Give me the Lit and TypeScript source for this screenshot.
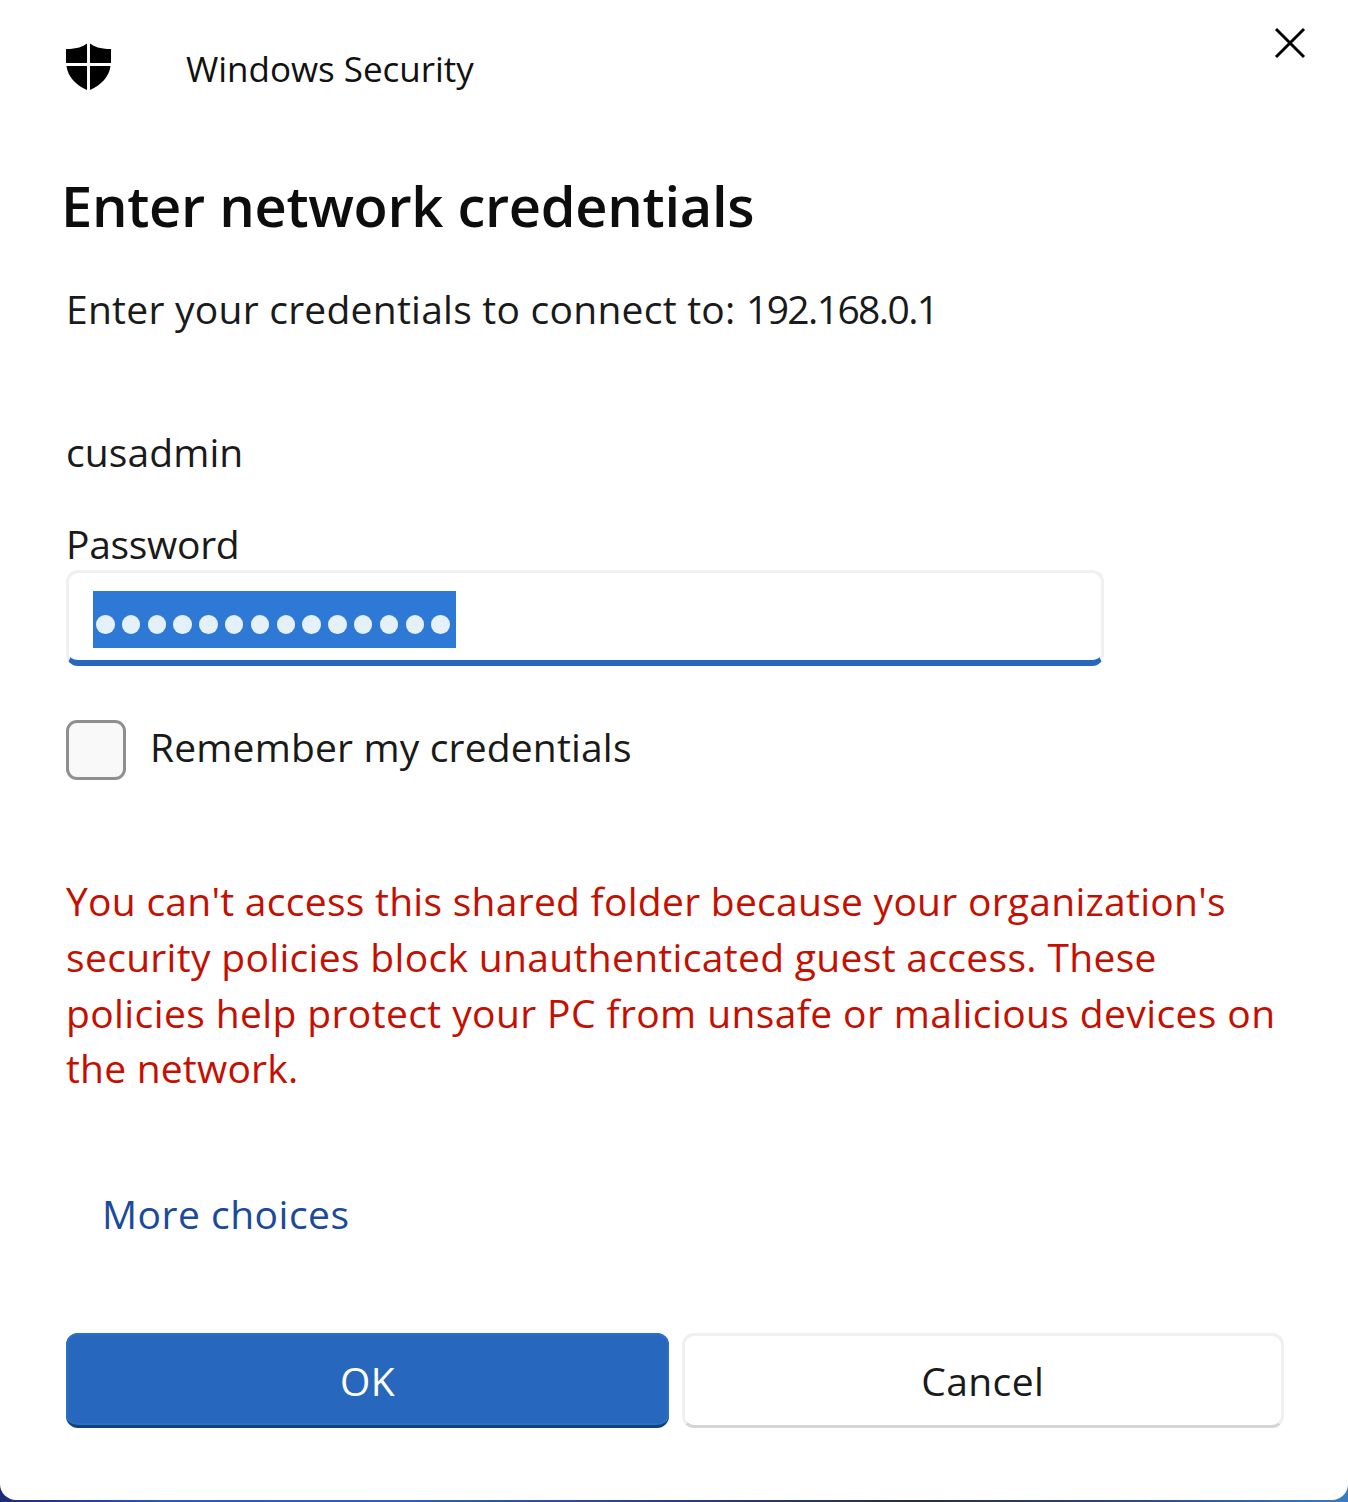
import { LitElement, html, css } from "lit";
import { customElement } from "lit/decorators.js";

@customElement("app-root")
export class AppRoot extends LitElement {
  static styles = css`
    :host {
      display: block;
      width: 1348px;
      height: 1502px;
      overflow: hidden;
      background: linear-gradient(90deg, #1c2a78 0%, #2a5aa8 12%, #2f62ad 30%, #27407f 50%, #2a2d40 68%, #2a4a80 84%, #3a7cc0 100%);
      font-family: "Open Sans", "Noto Sans", sans-serif;
      color: #1a1a1a;
    }
    .dialog {
      box-sizing: border-box;
      height: 1500px;
      background: #fff;
      border-radius: 0 0 16px 16px;
      padding: 0 66px;
      display: flex;
      flex-direction: column;
    }
    .head {
      display: flex;
      align-items: flex-start;
      height: 136px;
    }
    .shield { width: 45px; height: 48px; margin-top: 43px; flex: none; }
    .app {
      margin: 46px 0 0 75px;
      font-size: 35px;
      line-height: 46px;
      letter-spacing: -0.03px;
      color: #111;
    }
    .close { width: 32px; height: 32px; margin: 27px -24px 0 auto; flex: none; }
    h1 {
      margin: 0 0 0 -5px;
      height: 143px;
      font-size: 56px;
      line-height: 138px;
      font-weight: 600;
      color: #0d0d0d;
      letter-spacing: -0.3px;
    }
    .text { font-size: 39px; line-height: 52px; }
    .sub { height: 52px; margin-top: 4px; letter-spacing: 0.25px; }
    .num { letter-spacing: -1.6px; }
    .user { margin-top: 91px; letter-spacing: 0.1px; }
    .pw { margin-top: 40px; letter-spacing: -0.3px; }
    .field {
      box-sizing: border-box;
      width: 1038px;
      height: 96px;
      border: 3px solid #f0f0f0;
      border-bottom: 6px solid #2767bd;
      border-radius: 12px;
      padding: 18px 24px 0;
    }
    .sel {
      width: 363px;
      height: 57px;
      background: #2e78d6;
      box-sizing: border-box;
      padding: 24px 6px 0 3px;
      display: flex;
      justify-content: space-between;
    }
    .dot { width: 18.5px; height: 18.5px; border-radius: 50%; background: #e4f0fa; }
    .remember { display: flex; align-items: center; gap: 24px; margin-top: 54px; height: 60px; }
    .remember .text { letter-spacing: 0.17px; margin-bottom: 6px; }
    .box {
      box-sizing: border-box;
      width: 60px;
      height: 60px;
      border: 3px solid #8f8f8f;
      border-radius: 11px;
      background: #f9f9f9;
      flex: none;
    }
    .error {
      margin-top: 93px;
      color: #c50f00;
      font-size: 39px;
      line-height: 55.8px;
      white-space: nowrap;
    }
    .l1 { letter-spacing: 0.27px; }
    .l2 { letter-spacing: 0.32px; }
    .l3 { letter-spacing: 0.39px; }
    .l4 { letter-spacing: 0.2px; }
    .more { margin: 92px 0 0 36px; color: #1b4a9c; height: 52px; letter-spacing: 0.5px; }
    .actions { display: grid; grid-template-columns: 603px 602.5px; gap: 12.5px; margin-top: 93px; }
    .btn {
      box-sizing: border-box;
      height: 95px;
      border-radius: 12px;
      display: flex;
      align-items: center;
      justify-content: center;
      font-size: 39px;
      letter-spacing: 0.4px;
    }
    .ok {
      background: #2767bd;
      border-bottom: 3px solid #123f7f;
      box-shadow: inset 0 0 0 2px #2a70c4;
      color: #fff;
      padding-top: 3px;
    }
    .cancel { border: 3px solid #f0f0f0; border-bottom-color: #d6d6d6; color: #1a1a1a; }
  `;

  render() {
    return html`
      <div class="dialog">
        <div class="head">
          <svg class="shield" viewBox="0 0 46 48" preserveAspectRatio="none" aria-hidden="true">
            <path fill="#000" d="M21.5 0.5 C17 3.5 12 6 0 6 V20 H21.5 Z M24.5 0.5 C29 3.5 34 6 46 6 V20 H24.5 Z M0.5 23 H21.5 V47 C10 42 2 34 0.5 23 Z M24.5 23 H45.5 C44 34 36 42 24.5 47 Z"/>
          </svg>
          <div class="app">Windows Security</div>
          <svg class="close" viewBox="0 0 32 32" aria-hidden="true">
            <path d="M2 2 L30 30 M30 2 L2 30" stroke="#000" stroke-width="3" fill="none"/>
          </svg>
        </div>
        <h1>Enter network credentials</h1>
        <div class="text sub">Enter your credentials to connect to: <span class="num">192.168.0.1</span></div>
        <div class="text user">cusadmin</div>
        <div class="text pw">Password</div>
        <div class="field">
          <div class="sel">${Array.from({ length: 14 }, () => html`<span class="dot"></span>`)}</div>
        </div>
        <div class="remember">
          <div class="box"></div>
          <div class="text">Remember my credentials</div>
        </div>
        <div class="error"><div class="l1">You can't access this shared folder because your organization's</div><div class="l2">security policies block unauthenticated guest access. These</div><div class="l3">policies help protect your PC from unsafe or malicious devices on</div><div class="l4">the network.</div></div>
        <div class="text more">More choices</div>
        <div class="actions">
          <div class="btn ok">OK</div>
          <div class="btn cancel">Cancel</div>
        </div>
      </div>
    `;
  }
}
